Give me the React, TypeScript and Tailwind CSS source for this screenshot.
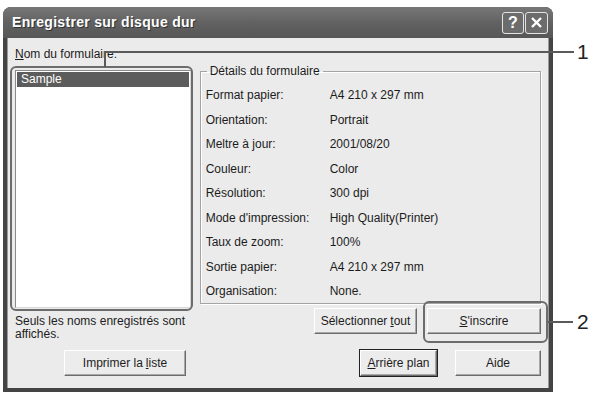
import React from "react";

const rows: [string, string][] = [
  ["Format papier:", "A4 210 x 297 mm"],
  ["Orientation:", "Portrait"],
  ["Meltre à jour:", "2001/08/20"],
  ["Couleur:", "Color"],
  ["Résolution:", "300 dpi"],
  ["Mode d'impression:", "High Quality(Printer)"],
  ["Taux de zoom:", "100%"],
  ["Sortie papier:", "A4 210 x 297 mm"],
  ["Organisation:", "None."],
];

function Btn({
  children,
  className = "",
  def = false,
}: {
  children: React.ReactNode;
  className?: string;
  def?: boolean;
}) {
  return (
    <div
      className={`h-[26px] flex items-center justify-center bg-[#ececec] text-[12px] text-[#1c1c1c] border border-t-white border-l-white border-b-[#6c6c6c] border-r-[#6c6c6c] shadow-[inset_-1px_-1px_0_#a8a8a8] ${
        def ? "outline outline-1 outline-[#222]" : ""
      } ${className}`}
    >
      {children}
    </div>
  );
}

export default function App() {
  return (
    <div
      className="relative w-[598px] h-[396px] bg-white overflow-hidden"
      style={{ fontFamily: '"Liberation Sans", Arial, sans-serif' }}
    >
      {/* window */}
      <div className="ml-[3px] mt-[7px] w-[550px] h-[385px] rounded-t-[8px] bg-[#444] flex flex-col overflow-hidden">
        <div className="h-[31px] flex items-center pl-[9px] pr-[5px] bg-gradient-to-b from-[#777] via-[#626262] to-[#565656]">
          <span className="text-white font-bold text-[14px] tracking-[0.3px] [text-shadow:1px_1px_0_#333]">
            Enregistrer sur disque dur
          </span>
          <div className="ml-auto flex gap-[1px]">
            <div className="w-[22px] h-[22px] rounded-[3px] border border-[#e4e4e4] bg-[#6c6c6c] flex items-center justify-center text-white font-bold text-[16px] leading-none">
              ?
            </div>
            <div className="w-[23px] h-[22px] rounded-[3px] border border-[#e4e4e4] bg-[#6c6c6c] flex items-center justify-center">
              <svg width="13" height="13" viewBox="0 0 13 13">
                <path d="M2 2 L11 11 M11 2 L2 11" stroke="white" strokeWidth="2.4" />
              </svg>
            </div>
          </div>
        </div>

        <div className="flex-1 mx-[4px] mb-[4px] bg-[#ebebeb] border-l border-r border-[#9a9a9a] pt-[9px] px-[7px] text-[12px] text-[#1c1c1c]">
          <div className="flex">
            <div className="w-[176px]">
              <div className="h-[14px] leading-[14px] mb-[9px]">
                <span className="underline">N</span>om du formulaire:
              </div>
              <div className="h-[238px] bg-white border border-[#8a8a8a] border-r-[#d8d8d8] border-b-[#d8d8d8] p-[1px]">
                <div className="h-[15px] bg-[#5c5c5c] text-white leading-[15px] pl-[4px]">Sample</div>
              </div>
            </div>
            <div className="ml-[9px] w-[342px] mt-[17px]">
              <fieldset className="h-[240px] border border-[#a4a4a4] shadow-[inset_1px_1px_0_white,1px_1px_0_white] pl-[5px] pr-0 pt-[5px] m-0">
                <legend className="ml-[1px] px-[3px] leading-[14px]">Détails du formulaire</legend>
                {rows.map(([k, v]) => (
                  <div key={k} className="flex h-[24.5px] items-center">
                    <div className="w-[124px]">{k}</div>
                    <div>{v}</div>
                  </div>
                ))}
              </fieldset>
            </div>
          </div>

          <div className="flex h-[42px]">
            <div className="w-[176px] pt-[7px] leading-[13px]">
              Seuls les noms enregistrés sont
              <br />
              affichés.
            </div>
            <div className="ml-[9px] w-[343px] flex justify-end gap-[10px]">
              <Btn className="w-[103px]">
                Sélectionner <span className="underline ml-[3px]">t</span>out
              </Btn>
              <Btn className="w-[114px]">
                <span className="underline">S</span>'inscrire
              </Btn>
            </div>
          </div>

          <div className="flex">
            <div className="w-[176px] pl-[49px]">
              <Btn className="w-[122px]">
                Imprimer la <span className="underline ml-[3px]">l</span>iste
              </Btn>
            </div>
            <div className="ml-[9px] w-[343px] flex justify-end gap-[18px]">
              <Btn className="w-[77px]" def>
                <span className="underline">A</span>rrière plan
              </Btn>
              <Btn className="w-[86px]">Aide</Btn>
            </div>
          </div>
        </div>
      </div>

      {/* callout 1 */}
      <div className="absolute left-[10px] top-[66px] w-[183px] h-[245px] border-2 border-[#6c6c6c] rounded-[6px]" />
      <div className="absolute left-[104px] top-[51px] w-[2px] h-[16px] bg-[#5a5a5a]" />
      <div className="absolute left-[104px] top-[51px] w-[470px] h-[2px] bg-[#5a5a5a]" />
      <div className="absolute left-[577px] top-[40px] text-[21px] leading-[24px] text-[#222]">1</div>

      {/* callout 2 */}
      <div className="absolute left-[423px] top-[301px] w-[125px] h-[42px] border-2 border-[#6c6c6c] rounded-[6px]" />
      <div className="absolute left-[548px] top-[321px] w-[25px] h-[2px] bg-[#5a5a5a]" />
      <div className="absolute left-[577px] top-[310px] text-[21px] leading-[24px] text-[#222]">2</div>
    </div>
  );
}
